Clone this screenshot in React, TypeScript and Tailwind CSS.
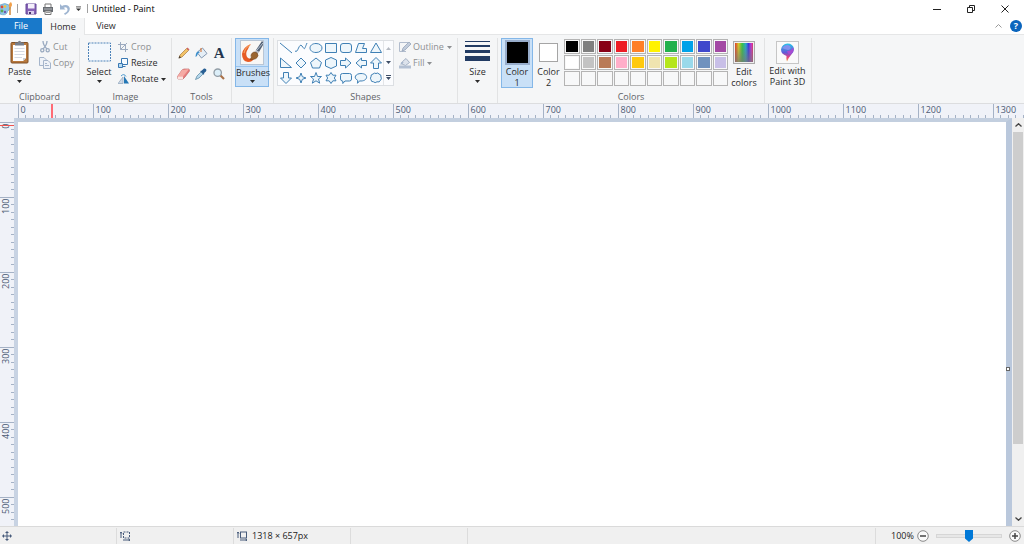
import React from "react";

const palette = [
  "#000000", "#7f7f7f", "#880015", "#ed1c24", "#ff7f27",
  "#fff200", "#22b14c", "#00a2e8", "#3f48cc", "#a349a4",
  "#ffffff", "#c3c3c3", "#b97a57", "#ffaec9", "#ffc90e",
  "#efe4b0", "#b5e61d", "#99d9ea", "#7092be", "#c8bfe7",
  "", "", "", "", "", "", "", "", "", "",
];

const shapes = [
  { name: "Line", d: "M1 2L13 12" },
  { name: "Curve", d: "M1 10C4 13 5 1 8 5S10 9 13 2" },
  { name: "Oval", d: "M7 2.5C15 2.5 15 11.5 7 11.5S-1 2.5 7 2.5Z" },
  { name: "Rectangle", d: "M1.5 2.5H12.5V11.5H1.5Z" },
  { name: "Rounded rectangle", d: "M4 2.5H10Q12.5 2.5 12.5 5V9Q12.5 11.5 10 11.5H4Q1.5 11.5 1.5 9V5Q1.5 2.5 4 2.5Z" },
  { name: "Polygon", d: "M4.5 2.5H10.5L8.5 7.5H12.5V11.5H1.5Z" },
  { name: "Triangle", d: "M7 2L12.5 11.5H1.5Z" },
  { name: "Right triangle", d: "M1.5 2L12.5 11.5H1.5Z" },
  { name: "Diamond", d: "M7 2L12 7L7 12L2 7Z" },
  { name: "Pentagon", d: "M7 2L12.5 6.5L10.5 12H3.5L1.5 6.5Z" },
  { name: "Hexagon", d: "M7 1.5L12.5 4V10L7 12.5L1.5 10V4Z" },
  { name: "Right arrow", d: "M1.5 4.5H6.5V2L12 7L6.5 12V9.5H1.5Z" },
  { name: "Left arrow", d: "M12.5 4.5H7.5V2L2 7L7.5 12V9.5H12.5Z" },
  { name: "Up arrow", d: "M7 1.5L12.5 7H9.5V12.5H4.5V7H1.5Z" },
  { name: "Down arrow", d: "M7 12.5L12.5 7H9.5V1.5H4.5V7H1.5Z" },
  { name: "Four-point star", d: "M7 2L8.3 5.7L12 7L8.3 8.3L7 12L5.7 8.3L2 7L5.7 5.7Z" },
  { name: "Five-point star", d: "M7 1.5L8.5 5.5H12.5L9.5 8L10.7 12.2L7 9.8L3.3 12.2L4.5 8L1.5 5.5H5.5Z" },
  { name: "Six-point star", d: "M7 1.5L8.8 4.2H12L10.3 7L12 9.8H8.8L7 12.5L5.2 9.8H2L3.7 7L2 4.2H5.2Z" },
  { name: "Rounded callout", d: "M3.5 2.5H10.5Q12.5 2.5 12.5 4.5V8Q12.5 10 10.5 10H6L3.8 12.5V10H3.5Q1.5 10 1.5 8V4.5Q1.5 2.5 3.5 2.5Z" },
  { name: "Oval callout", d: "M7 2.5C15 2.5 14 10 7 10L5.5 9.9L3.5 12.3L3.7 9.3C-1 7 1.5 2.5 7 2.5Z" },
  { name: "Cloud callout", d: "M4 3Q5.5 1.5 7 2.5Q9 1.3 10 3Q12.5 3.5 12 6Q13 8 11.5 9.2Q10.5 11.8 8 10.8Q6 12.5 4.5 10.8Q2 11 2 8.8Q.8 7 2 5.8Q1.5 3.5 4 3Z" },
];

const RULER_STEP = 7.5;

const HorizontalRuler = () => (
  <svg className="block h-[14px] w-full shrink-0 bg-[#f0f2f8]" aria-hidden="true">
    {Array.from({ length: 135 }, (_, i) => {
      const x = Math.floor(18 + i * RULER_STEP) + 0.5;
      const major = i % 10 === 0;
      return (
        <g key={i}>
          <line x1={x} x2={x} y1={major ? 0 : 11} y2="14" stroke="#a5b2c6" />
          {major && (
            <text x={x + 2} y="9" className="fill-[#4c5b74] text-[9px]">
              {i * 10}
            </text>
          )}
        </g>
      );
    })}
    <line x1="52" x2="52" y1="0" y2="14" stroke="#ff6b75" strokeWidth="2" />
  </svg>
);

const VerticalRuler = () => (
  <div className="w-[14px] shrink-0 overflow-hidden bg-[#f0f2f8]">
    <svg className="block h-full w-full" aria-hidden="true">
      {Array.from({ length: 60 }, (_, i) => {
        const y = Math.floor(4 + i * RULER_STEP) + 0.5;
        const major = i % 10 === 0;
        return (
          <g key={i}>
            <line x1={major ? 0 : 11} x2="14" y1={y} y2={y} stroke="#a5b2c6" />
            {major && (
              <text
                transform={`translate(9 ${y + 1}) rotate(-90)`}
                textAnchor="end"
                className="fill-[#4c5b74] text-[9px]"
              >
                {i * 10}
              </text>
            )}
          </g>
        );
      })}
      <line x1="0" x2="14" y1="7.5" y2="7.5" stroke="#ef5350" />
    </svg>
  </div>
);

const Caret = ({ className = "" }: { className?: string }) => (
  <svg width="5" height="3" viewBox="0 0 5 3" className={`shrink-0 ${className}`}>
    <path d="M0 0H5L2.5 3Z" fill="currentColor" />
  </svg>
);

const Group = ({
  label,
  className,
  children,
}: {
  label?: string;
  className: string;
  children: React.ReactNode;
}) => (
  <section
    aria-label={label}
    className={`flex shrink-0 flex-col justify-between border-r border-[#e2e3e4] ${className}`}
  >
    <div className="flex items-start">{children}</div>
    {label && <div className="text-center leading-3 text-[#5f6368]">{label}</div>}
  </section>
);

const SmallButton = ({
  icon,
  label,
  muted,
  caret,
}: {
  icon: React.ReactNode;
  label: string;
  muted?: boolean;
  caret?: boolean;
}) => (
  <button
    type="button"
    className={`flex h-4 items-center gap-[2px] leading-4 ${muted ? "text-[#8d8f92]" : "text-[#2b2b2b]"}`}
  >
    {icon}
    <span>{label}</span>
    {caret && <Caret className="ml-px" />}
  </button>
);

const PaintLogo = () => (
  <svg width="13" height="14" viewBox="0 0 13 14">
    <path d="M0 3Q5 0 9 3Q12 6 9 8Q7 9 7 11Q5 14 0 12Z" fill="#8fc6e6" stroke="#5a9cc4" strokeWidth=".6" />
    <circle cx="2" cy="5" r="1.4" fill="#d94b3d" />
    <circle cx="5" cy="4.5" r="1.3" fill="#f3c63a" />
    <circle cx="2" cy="9" r="1.4" fill="#58a753" />
    <circle cx="5" cy="10" r="1.2" fill="#7259ad" />
    <path d="M10 5V13" stroke="#d08a3c" strokeWidth="1.5" />
    <path d="M9 5Q8 2 11 0Q13 3 11 5Z" fill="#f2a04a" />
  </svg>
);

const SaveIcon = () => (
  <svg width="12" height="12" viewBox="0 0 12 12">
    <path d="M1 1H11V11H1Z" fill="#8661b5" stroke="#65489a" />
    <path d="M3 1H9.5V5.5H3Z" fill="#f4f0fb" />
    <path d="M3 8H9V11H3Z" fill="#d8cdec" />
    <path d="M4 9H6V11H4Z" fill="#463168" />
  </svg>
);

const PrintIcon = () => (
  <svg width="12" height="12" viewBox="0 0 12 12">
    <path d="M3 1H9V5H3Z" fill="#fff" stroke="#777" />
    <path d="M1 4H11V9H1Z" fill="#686c72" />
    <path d="M2 6H10" stroke="#b5b8bd" />
    <path d="M3 8H9V11.5H3Z" fill="#fff" stroke="#777" />
    <path d="M4 9.5H8" stroke="#999" />
  </svg>
);

const UndoIcon = () => (
  <svg width="12" height="12" viewBox="0 0 12 12">
    <path d="M1 1V6.5H6.5L4.7 4.7Q8 3.5 8.5 6T5 10.5L6 12Q11 9.5 10.8 5.6Q10 1 4.5 2.2L3 3Z" fill="#9fb5d1" />
  </svg>
);

const PasteIcon = () => (
  <svg width="19" height="24" viewBox="0 0 19 24">
    <rect x="1" y="2.5" width="17" height="20.5" rx="1" fill="#b8793d" stroke="#805126" />
    <path d="M3 5H16V18L13 21H3Z" fill="#fff" />
    <path d="M13 21V18H16Z" fill="#c8ced8" />
    <path d="M4.5 8.5H14.5M4.5 11.5H14.5M4.5 14.5H14.5M4.5 17.5H12" stroke="#d5dae3" />
    <path d="M5 2.5H7.5Q9.5-1 11.5 2.5H14V5.5H5Z" fill="#777f8b" />
  </svg>
);

const CutIcon = () => (
  <svg width="12" height="12" viewBox="0 0 12 12" fill="none" stroke="#9aaac0" strokeWidth="1.3">
    <path d="M4 0Q4 4 8 8M8 0Q8 4 4 8" />
    <circle cx="3.3" cy="9.3" r="1.6" />
    <circle cx="8.7" cy="9.3" r="1.6" />
  </svg>
);

const CopyIcon = () => (
  <svg width="12" height="12" viewBox="0 0 12 12" fill="#eef2f8" stroke="#a5b5cb">
    <path d="M.5 .5H5L7.5 3V8.5H.5Z" />
    <path d="M4.5 3.5H9L11.5 6V11.5H4.5Z" />
    <path d="M6 6.5H8M6 8.5H10" />
  </svg>
);

const SelectIcon = () => (
  <svg width="23" height="20" viewBox="0 0 23 20">
    <rect x=".5" y="1" width="22" height="18" fill="#f3f8fd" stroke="#4d82b8" strokeDasharray="2 1" />
  </svg>
);

const CropIcon = () => (
  <svg width="11" height="10" viewBox="0 0 11 10" fill="none" stroke="#9dabc0">
    <path d="M2.5 0V7.5H10M0 2.5H7.5V10M2.5 7.5L9 1" />
  </svg>
);

const ResizeIcon = () => (
  <svg width="11" height="10" viewBox="0 0 11 10" fill="#f6fbff" stroke="#3978b3">
    <path d="M3.5 .5H9.5V6.5H3.5Z" />
    <path d="M.5 5.5H4.5V9.5H.5Z" fill="#b9dcf3" />
    <path d="M4.5 8.5H7.5" />
  </svg>
);

const RotateIcon = () => (
  <svg width="11" height="10" viewBox="0 0 11 10">
    <path d="M5 3V9.5H0Z" fill="#cfd9e5" stroke="#8fa5bd" strokeWidth=".7" />
    <path d="M6 2L11 9.5H6Z" fill="#2477b5" />
    <path d="M3 2Q6-1 8 2.5" fill="none" stroke="#4c98ce" />
  </svg>
);

const PencilIcon = () => (
  <svg width="12" height="12" viewBox="0 0 12 12">
    <path d="M1 11L2 8L8.5 1.5L10.5 3.5L4 10Z" fill="#f2c267" stroke="#a77a3f" strokeWidth=".7" />
    <path d="M8.5 1.5L9.5 .5L11.5 2.5L10.5 3.5Z" fill="#cf6363" />
    <path d="M.5 11.5L1.5 8.8L3.2 10.5Z" fill="#4a4038" />
  </svg>
);

const BucketIcon = ({ muted }: { muted?: boolean }) => (
  <svg width="13" height="12" viewBox="0 0 13 12">
    <path d="M3 4.5L7.5 1L12 6.5L6.5 11L2.5 6Z" fill={muted ? "#dde3ec" : "#e5eef6"} stroke={muted ? "#9eabbf" : "#7990aa"} strokeWidth=".9" />
    <path d="M5 5Q1 3 .5 10Q2.5 9 3 6.5Z" fill={muted ? "#a6b6cc" : "#3b8ecb"} />
    <path d="M6 1V5" stroke={muted ? "#8b9db7" : "#d77f45"} strokeWidth="1.2" />
  </svg>
);

const FillIcon = () => (
  <svg width="12" height="12" viewBox="0 0 12 12">
    <path d="M3.5 4.5L7 1.5L10.5 5.5L6.5 8.5L3 7Z" fill="#dde3ec" stroke="#9eabbf" strokeWidth=".9" />
    <path d="M5 5Q1.500 3.500 1.500 8Q3 8 3.500 6Z" fill="#a6b6cc" />
    <path d="M0 8.500H12V11.500H0Z" fill="#b3c0d3" />
  </svg>
);

const EraserIcon = () => (
  <svg width="13" height="12" viewBox="0 0 13 12" strokeWidth=".6">
    <path d="M5 2L7 1H12L12.5 3L8 9L6 11H1L.5 8.5Z" fill="#e87d7d" stroke="#b65959" />
    <path d="M.5 8.5H6L12 1L5 2Z" fill="#f5aaa4" />
    <path d="M.5 8.5H6V11H1Z" fill="#fbe3df" />
  </svg>
);

const PickerIcon = () => (
  <svg width="12" height="12" viewBox="0 0 12 12">
    <path d="M.5 11.5L2 8L6 4L8 6L4 10Z" fill="#b6d8ed" stroke="#55849f" strokeWidth=".7" />
    <path d="M5 3L6.5 2.8L9 .5Q11 0 11.5 2Q11.5 3.5 9.2 5L9 7Z" fill="#285f94" />
  </svg>
);

const MagnifierIcon = () => (
  <svg width="12" height="12" viewBox="0 0 12 12">
    <path d="M7 7L11 11" stroke="#aa7047" strokeWidth="2.2" />
    <circle cx="4.7" cy="4.7" r="3.7" fill="#dceff9" stroke="#929da6" strokeWidth="1.3" />
  </svg>
);

const BrushIcon = () => (
  <svg width="24" height="25" viewBox="0 0 24 25">
    <rect x=".5" y=".5" width="23" height="24" fill="#f8f7f5" stroke="#b9c6d5" />
    <path d="M11 4Q3 7 2 14Q2 21 8 22Q13 22 14 18Q9 20 7 17Q5 13 8 9Q9 6 11 4Z" fill="#e75b24" />
    <path d="M10 5Q5 8 4 13" fill="none" stroke="#f59a59" strokeWidth="1.3" />
    <path d="M16 10L22 1L23 2V5L19 12Z" fill="#526176" />
    <path d="M17 10L23 3" stroke="#b7c3d0" />
    <path d="M16 10L19 12L17.500 14.500L14.500 12Z" fill="#b6bac1" />
    <path d="M14 12Q18 12 18 15.500Q17 20 10 19.500Q12 18 11 15Q12 12.500 14 12Z" fill="#9a652f" stroke="#74451e" strokeWidth=".6" />
  </svg>
);

const OutlineIcon = () => (
  <svg width="12" height="12" viewBox="0 0 12 12">
    <path d="M.5 1.5H9M.5 1.5V10.5H7" fill="none" stroke="#b1bccd" />
    <path d="M3 10L4 7L10 1L12 3L6 9Z" fill="#c2ccdb" stroke="#8e9db4" strokeWidth=".7" />
  </svg>
);

const EditColorsIcon = () => (
  <svg width="22" height="23" viewBox="0 0 22 23">
    <defs>
      <linearGradient id="spectrum">
        <stop offset="0" stopColor="#e33a28" />
        <stop offset=".2" stopColor="#d9cb28" />
        <stop offset=".4" stopColor="#32c543" />
        <stop offset=".6" stopColor="#26a9d1" />
        <stop offset=".75" stopColor="#3735e5" />
        <stop offset=".9" stopColor="#cc35d2" />
        <stop offset="1" stopColor="#e13560" />
      </linearGradient>
      <linearGradient id="shade" x2="0" y2="1">
        <stop offset="0" stopColor="#777" stopOpacity="0" />
        <stop offset="1" stopColor="#777" stopOpacity=".75" />
      </linearGradient>
    </defs>
    <rect x=".5" y=".5" width="21" height="22" fill="#eee" stroke="#aaa" />
    <rect x="2" y="2" width="18" height="19" fill="url(#spectrum)" />
    <rect x="2" y="2" width="18" height="19" fill="url(#shade)" />
  </svg>
);

const Paint3DIcon = () => (
  <svg width="23" height="23" viewBox="0 0 23 23">
    <defs>
      <linearGradient id="drop" x2="0" y2="1">
        <stop offset="0" stopColor="#28c5e9" />
        <stop offset=".5" stopColor="#615bd8" />
        <stop offset=".75" stopColor="#e33e83" />
        <stop offset="1" stopColor="#f5a339" />
      </linearGradient>
    </defs>
    <rect x=".5" y=".5" width="22" height="22" fill="#fafafa" stroke="#c6c6c6" />
    <path d="M11.5 2.5Q17 2.5 18 8Q18 11 15 14Q13 16 11 20.5Q10 18 10.5 15Q5 13 5 8.5Q6 3 11.5 2.5Z" fill="url(#drop)" />
    <path d="M6 7Q10 2 14 5Q16 8 12 9Q8 8 6 7Z" fill="#8291ee" />
    <path d="M11 10Q16 10 17 6Q19 10 15 13Q12 14 11 10Z" fill="#a84bd2" />
  </svg>
);

const SizeIcon = ({ dashed }: { dashed?: boolean }) => (
  <svg width="11" height="10" viewBox="0 0 11 10" fill="none" stroke="#465a7a">
    <rect x="3.5" y="1" width="6" height="6" strokeDasharray={dashed ? "2 1" : undefined} />
    <path d="M1 1V7M0 2.5L1 1L2 2.5M3 9H10M8.5 8L10 9L8.5 10" />
  </svg>
);

const TitleBar = () => (
  <header className="flex h-[18px] shrink-0 items-center bg-white pb-px text-black">
    <PaintLogo />
    <div className="ml-1 h-[9px] border-l border-[#a0a0a0]" />
    <div className="ml-[7px] flex items-center gap-[5px]">
      <button type="button" aria-label="Save"><SaveIcon /></button>
      <button type="button" aria-label="Print"><PrintIcon /></button>
      <button type="button" aria-label="Undo"><UndoIcon /></button>
      <button type="button" aria-label="Customize toolbar">
        <svg width="5" height="6" viewBox="0 0 6 6">
          <path d="M0 .5H6" stroke="#333" />
          <path d="M0 2.5H6L3 5.5Z" fill="#333" />
        </svg>
      </button>
    </div>
    <div className="ml-[6px] h-[9px] border-l border-[#a0a0a0]" />
    <h1 className="ml-1">Untitled - Paint</h1>
    <div className="ml-auto flex items-center gap-[26px] pr-[15px]">
      <button type="button" aria-label="Minimize">
        <svg width="8" height="8" viewBox="0 0 8 8"><path d="M0 4.5H8" stroke="#222" /></svg>
      </button>
      <button type="button" aria-label="Restore">
        <svg width="8" height="8" viewBox="0 0 8 8" fill="none" stroke="#222">
          <path d="M.5 2.5H5.5V7.5H.5ZM2.5 2V.5H7.5V5.5H6" />
        </svg>
      </button>
      <button type="button" aria-label="Close">
        <svg width="8" height="8" viewBox="0 0 8 8"><path d="M.5 .5L7.5 7.5M7.5 .5L.5 7.5" stroke="#222" /></svg>
      </button>
    </div>
  </header>
);

const TabBar = () => (
  <nav className="flex h-[17px] shrink-0 items-stretch border-b border-[#e5e6e7] bg-white text-[#2b2b2b]">
    <button type="button" className="w-[42px] bg-[#1979ca] text-white">File</button>
    <button type="button" className="-mb-px w-[43px] border-r border-[#e5e6e7] bg-[#f5f6f7]">Home</button>
    <button type="button" className="w-[42px]">View</button>
    <div className="ml-auto flex items-center gap-2 pr-[2px]">
      <button type="button" aria-label="Collapse ribbon">
        <svg width="7" height="4" viewBox="0 0 7 4" fill="none" stroke="#999"><path d="M.5 3.5L3.5 .5L6.5 3.5" /></svg>
      </button>
      <button type="button" aria-label="Help" className="flex h-3 w-3 items-center justify-center rounded-full bg-[#0a65bd] font-bold text-white">
        ?
      </button>
    </div>
  </nav>
);

const Ribbon = () => (
  <div className="flex h-[69px] shrink-0 overflow-hidden border-b border-[#dcdddf] bg-[#f5f6f7] pt-[3px]">
    <Group label="Clipboard" className="w-[80px]">
      <button type="button" className="flex w-[39px] flex-col items-center pt-[2px] text-[#2b2b2b]">
        <PasteIcon />
        <span className="mt-[2px] leading-3">Paste</span>
        <Caret className="mt-[2px]" />
      </button>
      <div className="pt-px">
        <SmallButton muted icon={<CutIcon />} label="Cut" />
        <SmallButton muted icon={<CopyIcon />} label="Copy" />
      </div>
    </Group>

    <Group label="Image" className="w-[92px]">
      <button type="button" className="flex w-[38px] flex-col items-center pt-1 text-[#2b2b2b]">
        <SelectIcon />
        <span className="mt-1 leading-3">Select</span>
        <Caret className="mt-[2px]" />
      </button>
      <div className="pt-px">
        <SmallButton muted icon={<CropIcon />} label="Crop" />
        <SmallButton icon={<ResizeIcon />} label="Resize" />
        <SmallButton icon={<RotateIcon />} label="Rotate" caret />
      </div>
    </Group>

    <Group label="Tools" className="w-[60px]">
      <div className="grid w-full grid-cols-3 px-[3px] pt-1">
        <button type="button" aria-label="Pencil" className="grid h-[21px] place-items-center"><PencilIcon /></button>
        <button type="button" aria-label="Fill with color" className="grid h-[21px] place-items-center"><BucketIcon /></button>
        <button type="button" className="h-[21px] font-['Liberation_Serif',serif] text-[15px] font-bold text-[#24364f]">A</button>
        <button type="button" aria-label="Eraser" className="grid h-[21px] place-items-center"><EraserIcon /></button>
        <button type="button" aria-label="Color picker" className="grid h-[21px] place-items-center"><PickerIcon /></button>
        <button type="button" aria-label="Magnifier" className="grid h-[21px] place-items-center"><MagnifierIcon /></button>
      </div>
    </Group>

    <Group className="w-[42px] pl-[3px]">
      <button type="button" className="flex h-[49px] w-[34px] flex-col items-center border border-[#84b7e8] bg-[#c9e0f7] pt-px text-[#2b2b2b]">
        <BrushIcon />
        <span className="mt-px w-full border-t border-[#98c4ee] leading-3">
          Brushes
        </span>
        <Caret className="mt-px" />
      </button>
    </Group>

    <Group label="Shapes" className="w-[184px] px-[3px]">
      <div className="mt-[2px] flex h-[46px] border border-[#dcdfe3] bg-[#fbfcfe]">
        <div className="grid w-[105px] grid-cols-7">
          {shapes.map((shape) => (
            <button key={shape.name} type="button" aria-label={shape.name} className="grid place-items-center">
              <svg width="14" height="14" viewBox="0 0 14 14">
                <path d={shape.d} fill={shape.d.endsWith("Z") ? "#eef6fb" : "none"} stroke="#3f80b5" />
              </svg>
            </button>
          ))}
        </div>
        <div className="grid w-[10px] grid-rows-3 border-l border-[#e3e5e8] text-[#3d4d66]">
          <button type="button" aria-label="Previous shapes" className="grid place-items-center text-[#b5bac2]"><Caret className="rotate-180" /></button>
          <button type="button" aria-label="Next shapes" className="grid place-items-center"><Caret /></button>
          <button type="button" aria-label="All shapes" className="grid place-items-center">
            <svg width="5" height="5" viewBox="0 0 5 5"><path d="M0 0H5V1H0ZM0 2H5L2.5 5Z" fill="currentColor" /></svg>
          </button>
        </div>
      </div>
      <div className="ml-[5px] pt-px">
        <SmallButton muted caret icon={<OutlineIcon />} label="Outline" />
        <SmallButton muted caret icon={<FillIcon />} label="Fill" />
      </div>
    </Group>

    <Group className="w-[40px]">
      <button type="button" className="flex w-full flex-col items-center pt-[3px] text-[#2b2b2b]">
        <svg width="25" height="22" viewBox="0 0 25 22" fill="#223b63">
          <path d="M0 0H25V1H0ZM0 4H25V6H0ZM0 9H25V12H0ZM0 15H25V20H0Z" />
        </svg>
        <span className="mt-[3px] leading-3">Size</span>
        <Caret className="mt-[2px]" />
      </button>
    </Group>

    <Group label="Colors" className="w-[267px] px-[3px]">
      <button type="button" className="flex h-[50px] w-[32px] flex-col items-center border border-[#84b7e8] bg-[#c9e0f7] pt-px text-[#2b2b2b]">
        <span className="h-[25px] w-[25px] shrink-0 border-2 border-[#98adcb] bg-black" />
        <span className="mt-px leading-[11px]">Color<br />1</span>
      </button>
      <button type="button" className="flex w-[31px] flex-col items-center pt-[5px] text-[#2b2b2b]">
        <span className="h-[19px] w-[19px] shrink-0 border border-[#a5a5a5] bg-white" />
        <span className="mt-1 leading-[11px]">Color<br />2</span>
      </button>
      <div className="mt-px grid w-[164px] grid-cols-10 gap-px">
        {palette.map((color, i) => (
          <button
            key={i}
            type="button"
            aria-label={color || "Empty color"}
            className="h-[15px] border border-[#b4b4b4] bg-[#f8f8f8] p-px"
          >
            <span className="block h-full w-full" style={{ background: color || "#f7f8f9" }} />
          </button>
        ))}
      </div>
      <button type="button" className="flex w-[32px] flex-col items-center pt-[3px] text-[#2b2b2b]">
        <EditColorsIcon />
        <span className="mt-[2px] leading-[11px]">Edit<br />colors</span>
      </button>
    </Group>

    <Group className="w-[47px]">
      <button type="button" className="flex w-[45px] flex-col items-center pt-[3px] text-[#2b2b2b]">
        <Paint3DIcon />
        <span className="mt-px leading-[11px] whitespace-nowrap">Edit with<br />Paint 3D</span>
      </button>
    </Group>
  </div>
);

const Workspace = () => (
  <main className="flex min-h-0 flex-1">
    <VerticalRuler />
    <div className="relative flex-1 border-t-4 border-r-[6px] border-l-4 border-t-[#c3cfdf] border-r-[#bac8dc] border-l-[#c8d3e3] bg-white">
      <div className="absolute top-[245px] -right-1 h-1 w-1 border border-[#666] bg-white" />
    </div>
    <div className="flex w-[12px] shrink-0 flex-col items-center bg-[#f0f0f0]">
      <button type="button" aria-label="Scroll up" className="grid h-[14px] w-full shrink-0 place-items-center">
        <svg width="7" height="4" viewBox="0 0 7 4" fill="none" stroke="#444" strokeWidth="1.3"><path d="M.5 3.5L3.5 .7L6.5 3.5" /></svg>
      </button>
      <div className="w-full flex-1 px-px">
        <div className="h-[82%] bg-[#cdcdcd]" />
      </div>
      <button type="button" aria-label="Scroll down" className="grid h-[14px] w-full shrink-0 place-items-center">
        <svg width="7" height="4" viewBox="0 0 7 4" fill="none" stroke="#444" strokeWidth="1.3"><path d="M.5 .5L3.5 3.3L6.5 .5" /></svg>
      </button>
    </div>
  </main>
);

const StatusBar = () => (
  <footer className="flex h-[18px] shrink-0 items-stretch border-t border-[#dadada] bg-[#f0f0f0] pt-px text-[#222]">
    <div className="flex w-[117px] items-center border-r border-[#dcdcdc] pl-[2px]">
      <svg width="10" height="10" viewBox="0 0 10 10">
        <path d="M5 1V9M1 5H9" stroke="#465a7a" />
        <path d="M5 0L7 2H3ZM5 10L7 8H3ZM0 5L2 3V7ZM10 5L8 3V7Z" fill="#465a7a" />
      </svg>
    </div>
    <div className="flex w-[117px] items-center border-r border-[#dcdcdc] pl-[3px]">
      <SizeIcon dashed />
    </div>
    <div className="flex w-[117px] items-center gap-1 border-r border-[#dcdcdc] pl-[3px]">
      <SizeIcon />
      <span>1318 × 657px</span>
    </div>
    <div className="w-[117px] border-r border-[#dcdcdc]" />
    <div className="flex-1 border-r border-[#dcdcdc]" />
    <div className="flex w-[148px] items-center pr-[3px] pl-[15px]">
      <label htmlFor="zoom" className="w-[26px]">100%</label>
      <button type="button" aria-label="Zoom out">
        <svg width="12" height="12" viewBox="0 0 12 12" fill="#fafafa" stroke="#8a8a8a"><circle cx="6" cy="6" r="5.3" /><path d="M3 6H9" stroke="#444" strokeWidth="1.5" /></svg>
      </button>
      <input
        id="zoom"
        type="range"
        defaultValue="50"
        className="mx-[7px] h-[14px] w-0 flex-1 appearance-none bg-transparent [&::-webkit-slider-runnable-track]:h-1 [&::-webkit-slider-runnable-track]:border [&::-webkit-slider-runnable-track]:border-[#d6d6d6] [&::-webkit-slider-runnable-track]:bg-[#e7e7e7] [&::-webkit-slider-thumb]:-mt-[5px] [&::-webkit-slider-thumb]:h-3 [&::-webkit-slider-thumb]:w-2 [&::-webkit-slider-thumb]:appearance-none [&::-webkit-slider-thumb]:bg-[#0078d7] [&::-webkit-slider-thumb]:[clip-path:polygon(0_0,100%_0,100%_70%,50%_100%,0_70%)]"
      />
      <button type="button" aria-label="Zoom in">
        <svg width="12" height="12" viewBox="0 0 12 12" fill="#fafafa" stroke="#8a8a8a"><circle cx="6" cy="6" r="5.3" /><path d="M3 6H9M6 3V9" stroke="#444" strokeWidth="1.5" /></svg>
      </button>
    </div>
  </footer>
);

export default function App() {
  return (
    <div className="flex h-screen flex-col overflow-hidden bg-white font-['Open_Sans',sans-serif] text-[9px]">
      <TitleBar />
      <TabBar />
      <Ribbon />
      <HorizontalRuler />
      <Workspace />
      <StatusBar />
    </div>
  );
}
